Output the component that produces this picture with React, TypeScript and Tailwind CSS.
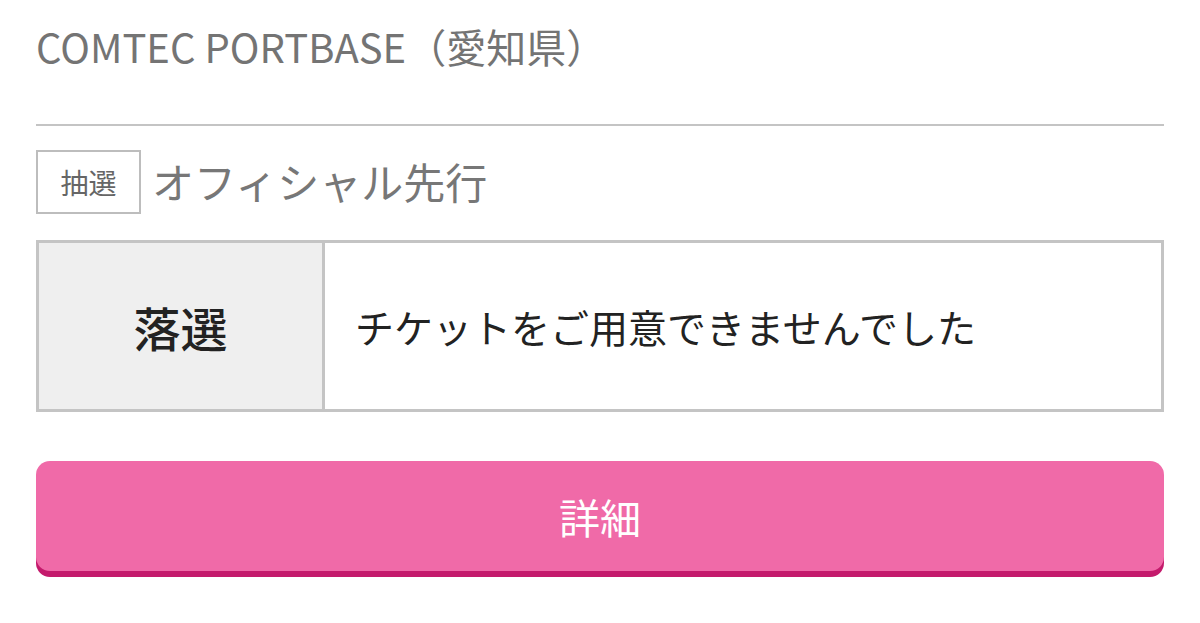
import React from "react";

export default function App() {
  const font = { fontFamily: '"Noto Sans CJK JP", "Noto Sans", sans-serif' };
  return (
    <div className="w-[1200px] h-[623px] bg-white overflow-hidden" style={font}>
      <div className="mx-[36px] flex flex-col">
        <div className="pt-[26px] h-[124px]">
          <h1 className="text-[40px] leading-[40px] text-[#747474] font-normal">
            COMTEC PORTBASE（愛知県）
          </h1>
        </div>
        <div className="h-[2px] bg-[#c4c4c4]" />
        <div className="mt-[24px] flex items-center">
          <div className="w-[105px] h-[64px] border-[2px] border-[#bdbdbd] flex items-center justify-center text-[28px] leading-none text-[#666666]">
            抽選
          </div>
          <div className="ml-[11px] text-[42px] leading-none text-[#777777] -mt-[2px]">
            オフィシャル先行
          </div>
        </div>
        <div className="mt-[26px] h-[172px] border-[3px] border-[#c4c4c4] flex">
          <div className="w-[286px] bg-[#efefef] border-r-[3px] border-[#c4c4c4] flex items-center justify-center text-[47px] leading-none font-medium text-[#222222]">
            落選
          </div>
          <div className="flex-1 flex items-center pl-[30px] text-[39px] leading-none text-[#222222]">
            チケットをご用意できませんでした
          </div>
        </div>
        <button className="mt-[49px] rounded-[14px] bg-[#f06aa8] shadow-[0_6px_0_#c41a6c] flex items-center justify-center text-white text-[41px] leading-none" style={{ height: 110 }}>
          詳細
        </button>
      </div>
    </div>
  );
}
